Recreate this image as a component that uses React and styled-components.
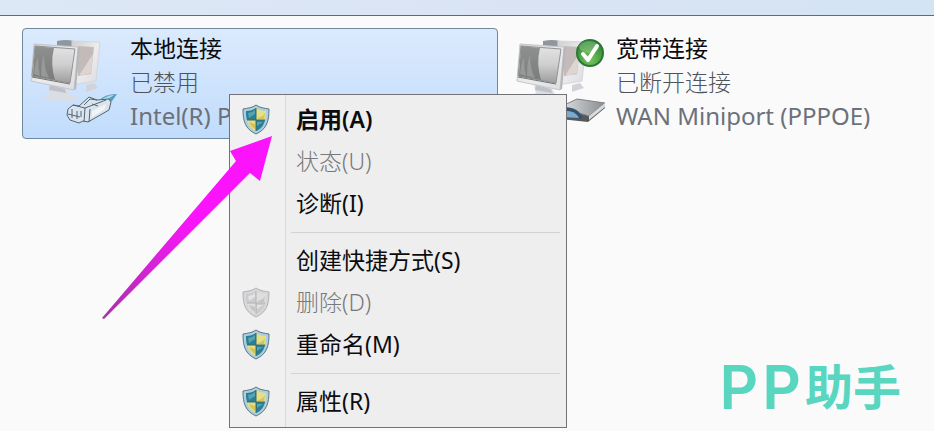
import React from 'react';
import styled, { createGlobalStyle } from 'styled-components';

//Data
const connections = [
	{
		id: 'lan',
		name: '本地连接',
		status: '已禁用',
		device: 'Intel(R) P',
		selected: true,
	},
	{
		id: 'wan',
		name: '宽带连接',
		status: '已断开连接',
		device: 'WAN Miniport (PPPOE)',
		selected: false,
	},
];

const menuGroups = [
	[
		{ label: '启用(A)', shield: true, main: true },
		{ label: '状态(U)', disabled: true },
		{ label: '诊断(I)' },
	],
	[
		{ label: '创建快捷方式(S)' },
		{ label: '删除(D)', shield: true, disabled: true },
		{ label: '重命名(M)', shield: true },
	],
	[{ label: '属性(R)', shield: true }],
];

//Icons
const Monitors = ({ id }) => (
	<>
		<defs>
			<linearGradient id={`${id}-frame`} x1='0' y1='0' x2='1' y2='1'>
				<stop offset='0' stopColor='#cfd0d2' />
				<stop offset='0.5' stopColor='#ececee' />
				<stop offset='1' stopColor='#dcdbde' />
			</linearGradient>
			<linearGradient id={`${id}-dark`} x1='0' y1='0' x2='0' y2='1'>
				<stop offset='0' stopColor='#8f9090' />
				<stop offset='1' stopColor='#7a7b7b' />
			</linearGradient>
			<linearGradient id={`${id}-light`} x1='0' y1='0' x2='0' y2='1'>
				<stop offset='0' stopColor='#e4e4e6' />
				<stop offset='0.5' stopColor='#cfcfd0' />
				<stop offset='1' stopColor='#9f9d9d' />
			</linearGradient>
		</defs>
		<path d='M27 2q9-2 17 0v6H27z' fill='#8f979e' />
		<path d='M42 2l28 1-4 39-24 4z' fill={`url(#${id}-frame)`} stroke='#d6d6da' />
		<path d='M48 7l16 1-3 27-13 2z' fill='#c2bbba' />
		<path d='M50 35l13-20-2 19-11 3z' fill='#ded5d2' />
		<path d='M56 46l8-2 4 5-12 4z' fill='#d2d4d9' />
		<path d='M18 46l18 4 3 5 11 4-9 3-22-1-6-4 7-3z' fill='#dadde3' />
		<path d='M20 46l15 4 1 4-17-3z' fill='#bec1c7' />
		<path d='M4 5l44 3-4 43-43-9z' fill={`url(#${id}-frame)`} stroke='#c6c6ca' />
		<path d='M5 7l40 3-5 34-38-7z' fill={`url(#${id}-light)`} stroke='#929494' />
		<path d='M5 7l19 2q-4 15 1 32L3 37z' fill={`url(#${id}-dark)`} />
		<path
			d='M4 35q1-10 4-17 0 10 2 19zM11 37q0-14 3-21 0 14 5 23z'
			fill='#a2a3a4'
			opacity='.7'
		/>
		<path d='M2 38l38 7' stroke='#707273' />
		<path d='M48 8l2 1-4 41-2 1z' fill='#b5b6ba' />
	</>
);

const LanIcon = () => (
	<ConnectionArt viewBox='0 0 92 86' aria-hidden='true'>
		<Monitors id='lan' />
		<path d='M69 62q5-7 18-7l-5 7-9 5z' fill='#4f9ebd' />
		<path d='M71 61q7-5 13-5l-6 4z' fill='#a8dcec' />
		<path
			d='M38 70l5-4 6 1 10-9 8 3 12-1 2 3-2 8-21 12-5-1-4 2-9-3-3-5z'
			fill='#d9e4ee'
			stroke='#566470'
		/>
		<path
			d='M43 66l12 3-1 14M55 69l21-8M54 66l6-6 7 1M60 70l-1 13M42 70v9M47 72v8M51 72v6M38 75l12 3M62 65l6 2'
			fill='none'
			stroke='#566470'
		/>
		<path d='M62 72l14-7-1 5-13 8z' fill='#f2f5f7' />
	</ConnectionArt>
);

const WanIcon = () => (
	<ConnectionArt viewBox='0 0 92 86' aria-hidden='true'>
		<defs>
			<linearGradient id='modem' x1='0' y1='0' x2='1' y2='0'>
				<stop offset='0' stopColor='#dfe1e2' />
				<stop offset='1' stopColor='#898d90' />
			</linearGradient>
			<radialGradient id='ok' cx='.5' cy='.75' r='.7'>
				<stop offset='0' stopColor='#79c65d' />
				<stop offset='1' stopColor='#2d8536' />
			</radialGradient>
		</defs>
		<Monitors id='wan' />
		<path d='M44 68l17-8 28 4v5L72 83l-28-3z' fill='#56595c' />
		<path d='M44 68l17-8 28 4-16 13z' fill='url(#modem)' stroke='#85898c' />
		<path d='M73 77l16-13v4L73 81z' fill='#d9dbdc' />
		<path d='M44 68q19-1 22 11v1l-22-2z' fill='#35516c' />
		<path d='M44 72q15-2 19 7l-19-1z' fill='#7ba9d0' />
		<circle cx='74' cy='14' r='13' fill='url(#ok)' stroke='#2b7735' strokeWidth='2' />
		<ellipse cx='73' cy='8' rx='10' ry='6' fill='#b5dfa9' opacity='.35' />
		<path
			d='M67 15l5 6 9-14'
			fill='none'
			stroke='#fff'
			strokeWidth='4'
			strokeLinecap='round'
			strokeLinejoin='round'
		/>
	</ConnectionArt>
);

const Shield = ({ muted }) => {
	const blue = muted ? '#cbcbcd' : '#2b7e95';
	const yellow = muted ? '#dededf' : '#e6df86';
	return (
		<ShieldArt viewBox='0 0 28 31' aria-hidden='true'>
			<path
				d='M14 1C10 4 6 4 1 5c0 12 2 20 13 25C25 25 27 17 27 5 22 4 18 4 14 1z'
				fill={muted ? '#d7d7d9' : '#a9cfe0'}
				stroke={muted ? '#b2b2b4' : '#5a7780'}
			/>
			<path d='M14 4c-3 2-6 3-10 3 0 3 0 6 1 9h9z' fill={blue} />
			<path d='M14 4c3 2 6 3 10 3 0 3 0 6-1 9h-9z' fill={yellow} />
			<path d='M5 16h9v11C9 25 6 21 5 16z' fill={yellow} />
			<path d='M23 16h-9v11c5-2 8-6 9-11z' fill={blue} />
			<path
				d='M6 9q4 0 7-3v4L7 14zM15 18h6l-6 4z'
				fill={muted ? '#ececed' : '#67b5bd'}
				opacity='.7'
			/>
			<path
				d='M16 14q5-1 7-5l-1 6h-6zM7 18l6 2v5q-4-2-6-7z'
				fill={muted ? '#b9b9bb' : '#cfb64b'}
				opacity='.7'
			/>
			<path d='M14 4v23M5 16h18' stroke={muted ? '#b2b2b4' : '#386d65'} />
		</ShieldArt>
	);
};

const App = () => {
	return (
		<>
			<GlobalStyle />
			<StyledPage>
				<StyledToolbar />
				<StyledConnections>
					{connections.map((item) => (
						<StyledConnection key={item.id} $selected={item.selected}>
							{item.id === 'lan' ? <LanIcon /> : <WanIcon />}
							<StyledInfo>
								<StyledName>{item.name}</StyledName>
								<StyledStatus>{item.status}</StyledStatus>
								<StyledDevice>{item.device}</StyledDevice>
							</StyledInfo>
						</StyledConnection>
					))}
				</StyledConnections>
				<StyledMenu role='menu'>
					{menuGroups.map((group, index) => (
						<StyledGroup key={index} role='group'>
							{group.map((item) => (
								<StyledItem
									key={item.label}
									role='menuitem'
									disabled={item.disabled}
									$main={item.main}>
									<StyledIconCell>
										{item.shield && <Shield muted={item.disabled} />}
									</StyledIconCell>
									<span>{item.label}</span>
								</StyledItem>
							))}
						</StyledGroup>
					))}
				</StyledMenu>
				<StyledArrow viewBox='0 0 172 186' aria-hidden='true'>
					<defs>
						<linearGradient id='arrow' x1='0' y1='1' x2='1' y2='0'>
							<stop offset='0' stopColor='#a632a6' />
							<stop offset='0.35' stopColor='#e01fe0' />
							<stop offset='0.55' stopColor='#fb14fb' />
						</linearGradient>
					</defs>
					<path d='M170 1l-12 45-10-8L2 184l-2-1L134 26l-6-10z' fill='url(#arrow)' />
				</StyledArrow>
				<StyledBrand>
					<StyledLatin>P</StyledLatin>
					<StyledLatin>P</StyledLatin>
					<span>助手</span>
				</StyledBrand>
			</StyledPage>
		</>
	);
};

const GlobalStyle = createGlobalStyle`
	* {
		box-sizing: border-box;
	}

	body {
		margin: 0;
		background: #fafafb;
		font-family: 'Noto Sans', 'Noto Sans CJK SC', sans-serif;
	}

	button {
		font: inherit;
		text-align: left;
	}
`;

const StyledPage = styled.main`
	position: relative;
	min-height: 100vh;
	overflow: hidden;
`;

const StyledToolbar = styled.header`
	height: 16px;
	background: linear-gradient(90deg, #dde8f6, #d9e3f4 60%, #d3e4f3);
	border-bottom: 1px solid #5f6c78;
`;

const StyledConnections = styled.section`
	display: grid;
	grid-template-columns: minmax(0, 476fr) minmax(0, 426fr);
	gap: 10px;
	padding: 12px 0 0 22px;
`;

const StyledConnection = styled.button`
	display: flex;
	gap: 8px;
	padding: 2px 8px 5px 7px;
	border: 1px solid ${(props) => (props.$selected ? '#71879c' : 'transparent')};
	border-radius: 4px;
	background: ${(props) =>
		props.$selected ? 'linear-gradient(#dbeafd, #c1dcfc)' : 'transparent'};
`;

const ConnectionArt = styled.svg`
	flex: none;
	width: 92px;
	height: 86px;
	margin-top: 8px;
`;

const StyledInfo = styled.span`
	display: flex;
	flex-direction: column;
	font-size: 23px;
	line-height: 34px;
	white-space: nowrap;
`;

const StyledName = styled.span`
	color: #0c0c10;
`;

const StyledStatus = styled.span`
	color: #4f545c;
	font-weight: 300;
`;

const StyledDevice = styled.span`
	color: #6c7179;
	font-size: 24px;
`;

const StyledMenu = styled.div`
	position: absolute;
	top: 94px;
	left: 229px;
	width: 338px;
	padding: 4px 0;
	border: 1px solid #737377;
	background: linear-gradient(
		90deg,
		#f0f0f1 55px,
		#dadadb 55px,
		#dadadb 56px,
		#eeeeef 56px
	);
`;

const StyledGroup = styled.div`
	& + &::before {
		content: '';
		display: block;
		height: 1px;
		margin: 7px 6px 7px 61px;
		background: #d3d3d5;
	}
`;

const StyledItem = styled.button`
	display: flex;
	align-items: center;
	gap: 14px;
	width: 100%;
	height: 42px;
	padding: 0 0 2px;
	border: 0;
	background: transparent;
	color: ${(props) => (props.disabled ? '#78787a' : '#0c0c0e')};
	font-size: 23px;
	font-weight: ${(props) => (props.$main ? 600 : props.disabled ? 300 : 400)};
	line-height: 34px;
`;

const StyledIconCell = styled.span`
	display: flex;
	justify-content: center;
	width: 52px;
`;

const ShieldArt = styled.svg`
	width: 28px;
	height: 31px;
`;

const StyledArrow = styled.svg`
	position: absolute;
	top: 135px;
	left: 102px;
	width: 172px;
	height: 186px;
	pointer-events: none;
`;

const StyledBrand = styled.div`
	position: absolute;
	right: 33px;
	bottom: 16px;
	display: flex;
	align-items: flex-end;
	gap: 4px;
	color: #58d6c0;
	font-family: 'Noto Sans CJK SC', sans-serif;
	font-size: 48px;
	font-weight: 700;
	line-height: 62px;
`;

const StyledLatin = styled.span`
	font-family: Inter, sans-serif;
	font-size: 60px;
	font-weight: 600;
	line-height: 56px;
`;

export default App;
